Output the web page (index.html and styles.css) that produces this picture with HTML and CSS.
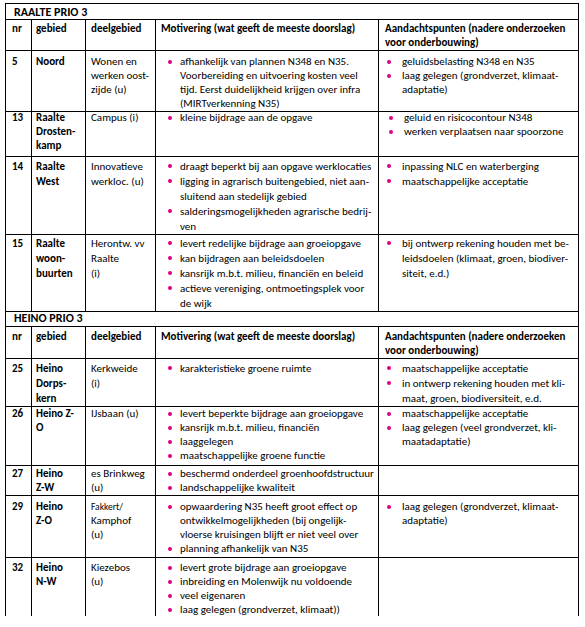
FILE: index.html
```html
<!DOCTYPE html>
<html lang="nl">
<head>
<meta charset="utf-8">
<title>Prio 3 gebieden</title>
<link rel="stylesheet" href="styles.css">
</head>
<body>
<div class="sheet">
  <div class="section-title t1">RAALTE PRIO 3</div>
  <div class="row head h1">
    <div class="cell c-nr">nr</div>
    <div class="cell c-geb">gebied</div>
    <div class="cell c-deel">deelgebied</div>
    <div class="cell c-mot">Motivering (wat geeft de meeste doorslag)</div>
    <div class="cell c-aan">Aandachtspunten (nadere onderzoeken<br>voor onderbouwing)</div>
  </div>
  <div class="row r5">
    <div class="cell c-nr b">5</div>
    <div class="cell c-geb b">Noord</div>
    <div class="cell c-deel">Wonen en<br>werken oost-<br>zijde (u)</div>
    <div class="cell c-mot"><ul class="bullets"><li><span>afhankelijk van plannen N348 en N35.<br>Voorbereiding en uitvoering kosten veel<br>tijd. Eerst duidelijkheid krijgen over infra<br>(MIRTverkenning N35)</span></li></ul></div>
    <div class="cell c-aan"><ul class="bullets"><li><span>geluidsbelasting N348 en N35</span></li><li><span>laag gelegen (grondverzet, klimaat-<br>adaptatie)</span></li></ul></div>
  </div>
  <div class="row r13">
    <div class="cell c-nr b">13</div>
    <div class="cell c-geb b">Raalte<br>Drosten-<br>kamp</div>
    <div class="cell c-deel">Campus (i)</div>
    <div class="cell c-mot"><ul class="bullets"><li><span>kleine bijdrage aan de opgave</span></li></ul></div>
    <div class="cell c-aan shifted"><ul class="bullets"><li><span>geluid en risicocontour N348</span></li><li><span>werken verplaatsen naar spoorzone</span></li></ul></div>
  </div>
  <div class="row r14">
    <div class="cell c-nr b">14</div>
    <div class="cell c-geb b">Raalte<br>West</div>
    <div class="cell c-deel">Innovatieve<br>werkloc. (u)</div>
    <div class="cell c-mot"><ul class="bullets"><li><span>draagt beperkt bij aan opgave werklocaties</span></li><li><span>ligging in agrarisch buitengebied, niet aan-<br>sluitend aan stedelijk gebied</span></li><li><span>salderingsmogelijkheden agrarische bedrij-<br>ven</span></li></ul></div>
    <div class="cell c-aan"><ul class="bullets"><li><span>inpassing NLC en waterberging</span></li><li><span>maatschappelijke acceptatie</span></li></ul></div>
  </div>
  <div class="row r15">
    <div class="cell c-nr b">15</div>
    <div class="cell c-geb b">Raalte<br>woon-<br>buurten</div>
    <div class="cell c-deel">Herontw. vv<br>Raalte<br>(i)</div>
    <div class="cell c-mot"><ul class="bullets"><li><span>levert redelijke bijdrage aan groeiopgave</span></li><li><span>kan bijdragen aan beleidsdoelen</span></li><li><span>kansrijk m.b.t. milieu, financiën en beleid</span></li><li><span>actieve vereniging, ontmoetingsplek voor<br>de wijk</span></li></ul></div>
    <div class="cell c-aan"><ul class="bullets"><li><span>bij ontwerp rekening houden met be-<br>leidsdoelen (klimaat, groen, biodiver-<br>siteit, e.d.)</span></li></ul></div>
  </div>

  <div class="section-title t2">HEINO PRIO 3</div>
  <div class="row head h2">
    <div class="cell c-nr">nr</div>
    <div class="cell c-geb">gebied</div>
    <div class="cell c-deel">deelgebied</div>
    <div class="cell c-mot">Motivering (wat geeft de meeste doorslag)</div>
    <div class="cell c-aan">Aandachtspunten (nadere onderzoeken<br>voor onderbouwing)</div>
  </div>
  <div class="row r25">
    <div class="cell c-nr b">25</div>
    <div class="cell c-geb b">Heino<br>Dorps-<br>kern</div>
    <div class="cell c-deel">Kerkweide<br>(i)</div>
    <div class="cell c-mot"><ul class="bullets"><li><span>karakteristieke groene ruimte</span></li></ul></div>
    <div class="cell c-aan"><ul class="bullets"><li><span>maatschappelijke acceptatie</span></li><li><span>in ontwerp rekening houden met kli-<br>maat, groen, biodiversiteit, e.d.</span></li></ul></div>
  </div>
  <div class="row r26">
    <div class="cell c-nr b">26</div>
    <div class="cell c-geb b">Heino Z-<br>O</div>
    <div class="cell c-deel">IJsbaan (u)</div>
    <div class="cell c-mot"><ul class="bullets"><li><span>levert beperkte bijdrage aan groeiopgave</span></li><li><span>kansrijk m.b.t. milieu, financiën</span></li><li><span>laaggelegen</span></li><li><span>maatschappelijke groene functie</span></li></ul></div>
    <div class="cell c-aan"><ul class="bullets"><li><span>maatschappelijke acceptatie</span></li><li><span>laag gelegen (veel grondverzet, kli-<br>maatadaptatie)</span></li></ul></div>
  </div>
  <div class="row r27">
    <div class="cell c-nr b">27</div>
    <div class="cell c-geb b">Heino<br>Z-W</div>
    <div class="cell c-deel">es Brinkweg<br>(u)</div>
    <div class="cell c-mot"><ul class="bullets"><li><span>beschermd onderdeel groenhoofdstructuur</span></li><li><span>landschappelijke kwaliteit</span></li></ul></div>
    <div class="cell c-aan"></div>
  </div>
  <div class="row r29">
    <div class="cell c-nr b">29</div>
    <div class="cell c-geb b">Heino<br>Z-O</div>
    <div class="cell c-deel"><span class="small">Fakkert/</span><br>Kamphof<br>(u)</div>
    <div class="cell c-mot"><ul class="bullets"><li><span>opwaardering N35 heeft groot effect op<br>ontwikkelmogelijkheden (bij ongelijk-<br>vloerse kruisingen blijft er niet veel over</span></li><li><span>planning afhankelijk van N35</span></li></ul></div>
    <div class="cell c-aan"><ul class="bullets"><li><span>laag gelegen (grondverzet, klimaat-<br>adaptatie)</span></li></ul></div>
  </div>
  <div class="row r32">
    <div class="cell c-nr b">32</div>
    <div class="cell c-geb b">Heino<br>N-W</div>
    <div class="cell c-deel">Kiezebos<br>(u)</div>
    <div class="cell c-mot"><ul class="bullets"><li><span>levert grote bijdrage aan groeiopgave</span></li><li><span>inbreiding en Molenwijk nu voldoende</span></li><li><span>veel eigenaren</span></li><li><span>laag gelegen (grondverzet, klimaat))</span></li></ul></div>
    <div class="cell c-aan"></div>
  </div>
</div>
</body>
</html>
```
FILE: styles.css
```css
html, body {
  margin: 0;
  padding: 0;
  background: #ffffff;
}

body {
  font-family: "Carlito", "Calibri", "Lato", "Liberation Sans", sans-serif;
  font-size: 11px;
  line-height: 14px;
  color: #000000;
}

.sheet {
  width: 574px;
  margin: 3px 0 0 5px;
  border-left: 1px solid #000;
  border-top: 1px solid #000;
  box-sizing: border-box;
}

.section-title {
  box-sizing: border-box;
  border-right: 1px solid #000;
  border-bottom: 1px solid #000;
  padding-left: 8px;
  font-weight: 700;
  font-size: 12px;
  white-space: nowrap;
}

.t1 { height: 16px; padding-top: 1px; }
.t2 { height: 17px; padding-top: 1px; }

.row {
  display: grid;
  grid-template-columns: 26px 54px 70px 223px 200px;
  --pt: 3px;
}

.cell {
  box-sizing: border-box;
  border-right: 1px solid #000;
  border-bottom: 1px solid #000;
  padding-top: var(--pt);
  white-space: nowrap;
  overflow: visible;
}

.head .cell { font-weight: 700; }
.b { font-weight: 700; }

.c-nr { padding-left: 6px; }
.c-geb { padding-left: 4px; }
.c-deel { padding-left: 5px; }
.c-mot { padding-left: 5px; }
.c-aan { padding-left: 6px; }

.c-mot .bullets li { grid-template-columns: 19px 1fr; }
.c-mot .bullets li::before { margin-left: 7px; }
.c-aan .bullets li { grid-template-columns: 17px 1fr; }
.c-aan .bullets li::before { margin-left: 2px; }
.c-aan.shifted .bullets li { grid-template-columns: 19px 1fr; }
.c-aan.shifted .bullets li::before { margin-left: 4px; }

.bullets {
  list-style: none;
  margin: 0;
  padding: 0;
}

.bullets li {
  display: grid;
  align-items: start;
}

.bullets li::before {
  content: "";
  width: 4px;
  height: 4px;
  margin-top: 5px;
  border-radius: 50%;
  background: #e0007f;
}

.small { font-size: 9.5px; }

.h1 { height: 30px; --pt: 2px; }
.r5 { height: 58px; --pt: 5px; }
.r13 { height: 49px; --pt: 3px; }
.r14 { height: 76px; --pt: 2px; line-height: 15px; }
.r15 { height: 77px; --pt: 3px; line-height: 15px; }
.h2 { height: 31px; --pt: 3px; }
.r25 { height: 49px; --pt: 3px; line-height: 15px; }
.r26 { height: 59px; --pt: 0px; }
.r27 { height: 28px; --pt: 1px; }
.r29 { height: 64px; --pt: 6px; }
.r32 { height: 58px; --pt: 3px; }
```
